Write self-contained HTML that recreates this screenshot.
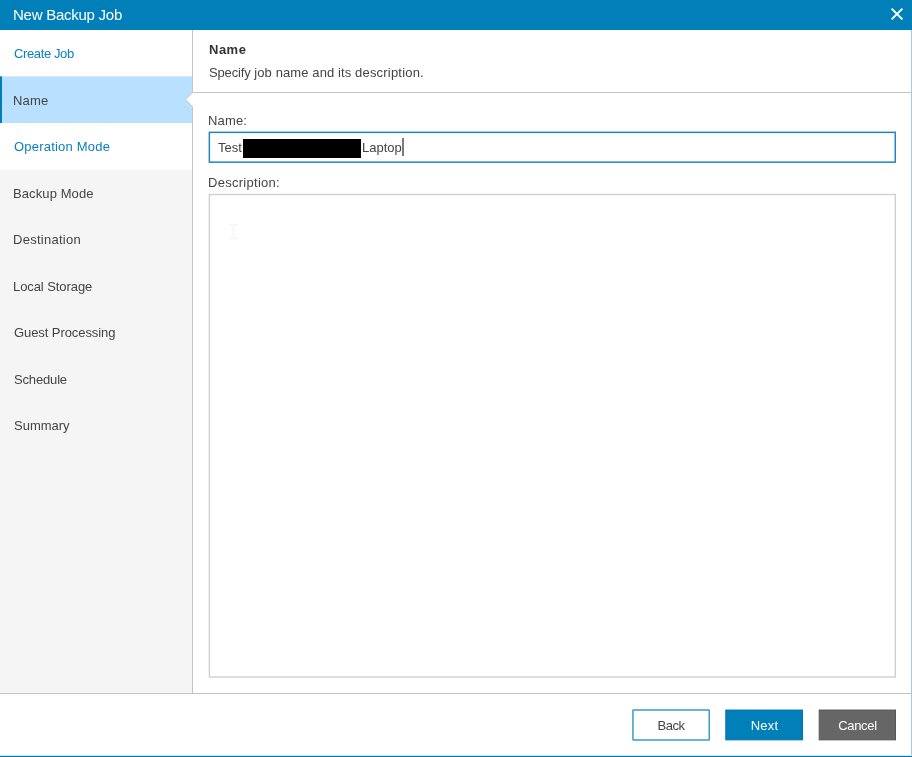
<!DOCTYPE html>
<html lang="en">
<head>
<meta charset="utf-8">
<title>New Backup Job</title>
<style>
html,body{margin:0;padding:0;}
body{width:912px;height:757px;overflow:hidden;background:#fff;font-family:"Liberation Sans",sans-serif;font-size:13px;color:#444;position:relative;}
.abs{position:absolute;white-space:nowrap;}
#win{position:absolute;left:0;top:0;width:912px;height:757px;overflow:hidden;background:#fff;}
.abs,.item,.lbl,.btn,#title .t{will-change:transform;}
#title{position:absolute;left:0;top:0;width:912px;height:30px;background:#007fb9;}
#title .t{position:absolute;left:13px;top:6px;font-size:15px;line-height:18px;color:#fff;letter-spacing:-0.25px;}
#side{position:absolute;left:0;top:30px;width:192px;height:663px;background:#f5f5f5;}
#sideborder{position:absolute;left:192px;top:30px;width:1px;height:663px;background:#c4c4c4;}
.row{position:absolute;left:0;width:192px;}
.item{position:absolute;left:14px;font-size:13px;line-height:16px;white-space:nowrap;color:#444;}
.link{color:#0a80bd;}
#hdrline{position:absolute;left:193px;top:92px;width:718px;height:1px;background:#c4c4c4;}
#footline{position:absolute;left:0;top:693px;width:912px;height:1px;background:#c4c4c4;}
#rb{position:absolute;left:911px;top:30px;width:1px;height:727px;background:#9fcde6;}
#bb{position:absolute;left:0;top:755px;width:912px;height:2px;background:linear-gradient(#cfe6f2 0,#cfe6f2 1px,#0877af 1px,#0877af 2px);}
.lbl{position:absolute;left:209px;font-size:13px;line-height:16px;white-space:nowrap;color:#444;}
#inp{position:absolute;left:209px;top:132px;width:685px;height:29px;border:1px solid transparent;}
#ta{position:absolute;left:209px;top:194px;width:685px;height:481px;border:1px solid transparent;}
.btn{position:absolute;top:710px;height:30px;width:78px;box-sizing:border-box;text-align:center;font-size:13px;line-height:30px;}
</style>
</head>
<body>
<div id="win">
  <div id="title"><span class="t">New Backup Job</span>
    <svg class="abs" style="left:890px;top:7px" width="14" height="14" viewBox="0 0 14 14"><path d="M1.6 1.6 L12.4 12.4 M12.4 1.6 L1.6 12.4" stroke="#fff" stroke-width="2" fill="none"/></svg>
  </div>
  <div id="side">
    <div class="row" style="top:0;height:47px;background:#fff"></div>
    <div class="row" style="top:46px;height:1px;background:#d0eaff"><div style="position:absolute;left:0;top:0;width:2px;height:1px;background:#4da5cf"></div></div>
    <div class="row" style="top:47px;height:46px;background:#b9e1ff"><div style="position:absolute;left:0;top:0;width:2px;height:46px;background:#007fb9"></div></div>
    <div class="row" style="top:93px;height:46px;background:#fff"></div>
    <div class="row" style="top:139px;height:1px;background:#fbfbfb"></div>
    <div class="item link" style="top:16px;letter-spacing:-0.38px">Create Job</div>
    <div class="item" style="top:63px;left:13px;letter-spacing:0.2px">Name</div>
    <div class="item link" style="top:109px;letter-spacing:0.21px">Operation Mode</div>
    <div class="item" style="top:156px;left:13px;letter-spacing:0.1px">Backup Mode</div>
    <div class="item" style="top:202px;left:13px;letter-spacing:0.27px">Destination</div>
    <div class="item" style="top:249px;left:13px;letter-spacing:-0.08px">Local Storage</div>
    <div class="item" style="top:295px;letter-spacing:-0.08px">Guest Processing</div>
    <div class="item" style="top:342px;letter-spacing:-0.16px">Schedule</div>
    <div class="item" style="top:388px">Summary</div>
  </div>
  <div id="sideborder"></div>
  <svg class="abs" style="left:184px;top:90px" width="10" height="20" viewBox="0 0 10 20"><path d="M9 2.5 L8.5 2.5 L1.5 9.6 L8.5 16.5 L9 16.5 Z" fill="#fff"/><path d="M8.5 2.5 L1.5 9.6 L8.5 16.5" fill="none" stroke="#c2c2c2" stroke-width="0.8"/></svg>
  <div class="lbl" style="top:42px;font-weight:bold;color:#333;letter-spacing:0.5px">Name</div>
  <div class="lbl" style="top:65px;letter-spacing:0.1px"><span style="letter-spacing:-0.15px">Specify</span> job name and its <span style="letter-spacing:0.2px">description.</span></div>
<svg id="shapes" style="position:absolute;left:0;top:0" width="912" height="757" viewBox="0 0 912 757">
    <rect x="209.35" y="132.35" width="685.9" height="29.8" fill="#fff" stroke="#1e88c2" stroke-width="1.5"/>
    <rect x="209.4" y="194.5" width="685.9" height="482.5" fill="#fff" stroke="#d0d0d0" stroke-width="1.4"/>
    <rect x="632.95" y="710.05" width="76.3" height="30" rx="0.5" fill="#fff" stroke="#3e9acd" stroke-width="1.5"/>
    <rect x="725.8" y="710.05" width="76.7" height="29.8" fill="#007fb9" stroke="#0074ab" stroke-width="1"/>
    <rect x="819.2" y="710.05" width="76.3" height="29.8" fill="#666" stroke="#575757" stroke-width="1"/>
  </svg>
  <div id="hdrline"></div>
  <div class="lbl" style="top:113px;left:208px;letter-spacing:0.15px">Name:</div>
  <div id="inp">
    <span class="abs" style="left:8px;top:7px;line-height:16px">Test</span>
    <div class="abs" style="left:33px;top:6px;width:118px;height:19px;background:#000"></div>
    <span class="abs" style="left:152px;top:7px;line-height:16px">Laptop</span>
    <div class="abs" style="left:192px;top:5px;width:2px;height:18px;background:#7a7a7a"></div>
  </div>
  <div class="lbl" style="top:175px;left:208px;letter-spacing:0.28px">Description:</div>
  <div id="ta"><svg class="abs" style="left:20px;top:28px" width="8" height="18" viewBox="0 0 8 18"><path d="M0 1.5 H3 M4 1.5 H7 M0 15.5 H3 M4 15.5 H7 M3.5 2 V15" fill="none" stroke="#f0f2f2" stroke-width="1"/></svg></div>
  <div id="footline"></div>
  <div class="btn" style="left:632px;color:#444;line-height:32px;letter-spacing:-0.5px">Back</div>
  <div class="btn" style="left:726px;width:77px;color:#fff;line-height:32px;letter-spacing:0.15px">Next</div>
  <div class="btn" style="left:819px;width:77px;color:#fff;line-height:32px;letter-spacing:-0.3px">Cancel</div>
  <div id="rb"></div>
  <div id="bb"></div>
</div>
</body>
</html>
